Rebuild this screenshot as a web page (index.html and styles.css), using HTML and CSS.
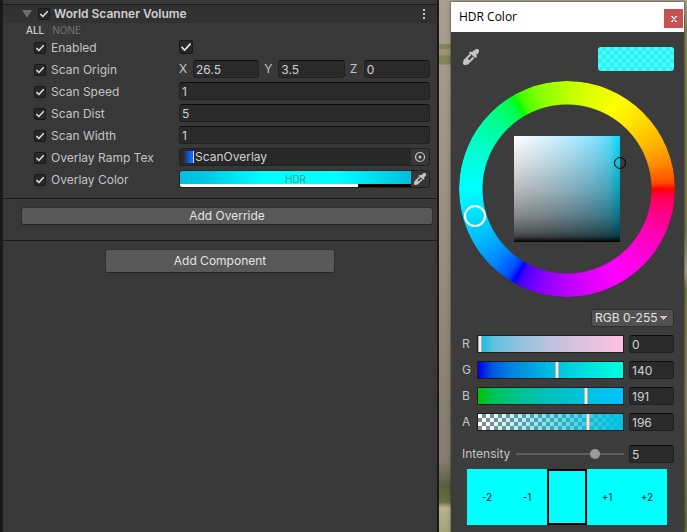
FILE: index.html
```html
<!DOCTYPE html>
<html lang="en">
<head>
<meta charset="utf-8">
<title>World Scanner Volume</title>
<meta name="viewport" content="width=device-width, initial-scale=1">
<link rel="stylesheet" href="styles.css">
</head>
<body>
<svg class="defs" aria-hidden="true">
  <symbol id="dropper" viewBox="0 0 16 16">
    <path fill="currentColor" d="M11 1.500 13 0h2l1 1v2l-1.500 2-1.500 1 1 1-1 2-2-1-1-1-1.500-1.500L7 5 6 4l1-1.500 2 .5z"/>
    <path fill="none" stroke="currentColor" stroke-width="2" d="M7.500 5.500 1.500 11.500 1 14.500l.5.500 3-.5 6-6"/>
    <path fill="currentColor" d="m1 12 3-3L7 12l-3 3H0z"/>
  </symbol>
</svg>
<main class="desktop">
  <section class="inspector">
    <header class="component-head">
      <button class="foldout" aria-label="Collapse"></button>
      <input class="check" type="checkbox" id="component" checked>
      <label class="component-title" for="component">World Scanner Volume</label>
      <button class="kebab" aria-label="Options"><i></i><i></i><i></i></button>
    </header>
    <div class="toggles">
      <button class="toggle toggle-on">ALL</button>
      <button class="toggle">NONE</button>
    </div>
    <div class="properties">
      <div class="row">
        <input class="check" type="checkbox" aria-label="Override Enabled" checked>
        <label class="name" for="enabled">Enabled</label>
        <div class="value"><input class="check check-large" type="checkbox" id="enabled" checked></div>
      </div>
      <div class="row">
        <input class="check" type="checkbox" aria-label="Override Scan Origin" checked>
        <span class="name">Scan Origin</span>
        <div class="value vector">
          <label class="axis" for="ox">X</label><input class="field" id="ox" value="26.5">
          <label class="axis" for="oy">Y</label><input class="field" id="oy" value="3.5">
          <label class="axis" for="oz">Z</label><input class="field" id="oz" value="0">
        </div>
      </div>
      <div class="row">
        <input class="check" type="checkbox" aria-label="Override Scan Speed" checked>
        <label class="name" for="speed">Scan Speed</label>
        <div class="value"><input class="field" id="speed" value="1"></div>
      </div>
      <div class="row">
        <input class="check" type="checkbox" aria-label="Override Scan Dist" checked>
        <label class="name" for="dist">Scan Dist</label>
        <div class="value"><input class="field" id="dist" value="5"></div>
      </div>
      <div class="row">
        <input class="check" type="checkbox" aria-label="Override Scan Width" checked>
        <label class="name" for="width">Scan Width</label>
        <div class="value"><input class="field" id="width" value="1"></div>
      </div>
      <div class="row">
        <input class="check" type="checkbox" aria-label="Override Overlay Ramp Tex" checked>
        <label class="name" for="ramp">Overlay Ramp Tex</label>
        <div class="value object-field">
          <button class="object" id="ramp"><span class="thumb"></span>ScanOverlay</button>
          <button class="field-tool" aria-label="Select texture">
            <svg width="12" height="12" viewBox="0 0 12 12"><circle cx="6" cy="6" r="4.500" fill="none" stroke="currentColor" stroke-width="1.200"/><circle cx="6" cy="6" r="1.500" fill="currentColor"/></svg>
          </button>
        </div>
      </div>
      <div class="row">
        <input class="check" type="checkbox" aria-label="Override Overlay Color" checked>
        <label class="name" for="color">Overlay Color</label>
        <div class="value object-field">
          <button class="hdr" id="color"><span class="hdr-color">HDR</span><span class="hdr-alpha"></span></button>
          <button class="field-tool" aria-label="Pick overlay color"><svg width="12" height="12"><use href="#dropper"/></svg></button>
        </div>
      </div>
    </div>
    <div class="override-area"><button class="btn">Add Override</button></div>
    <div class="component-area"><button class="btn btn-tall">Add Component</button></div>
  </section>

  <section class="picker">
    <header class="titlebar"><h1 class="title">HDR Color</h1><button class="close" aria-label="Close"><svg width="6" height="6" viewBox="0 0 6 6"><path d="M1 .5l4 5M5 .5l-4 5M0 .5h2M4 .5h2M0 5.500h2M4 5.500h2" stroke="currentColor" stroke-width="1.200"/></svg></button></header>
    <div class="picker-body">
      <div class="picker-top">
        <button class="pick" aria-label="Pick color"><svg width="16" height="16"><use href="#dropper"/></svg></button>
        <div class="preview"></div>
      </div>
      <div class="wheel">
        <div class="square"><span class="square-cursor"></span></div>
        <span class="wheel-cursor"></span>
      </div>
      <div class="mode-line">
        <select class="mode" aria-label="Color mode"><option>RGB 0-255</option></select>
      </div>
      <div class="channels">
        <div class="channel"><label for="r">R</label><input class="slider red" id="r" type="range" min="0" max="255" value="0"><input class="field" aria-label="Red" value="0"></div>
        <div class="channel"><label for="g">G</label><input class="slider green" id="g" type="range" min="0" max="255" value="140"><input class="field" aria-label="Green" value="140"></div>
        <div class="channel"><label for="b">B</label><input class="slider blue" id="b" type="range" min="0" max="255" value="191"><input class="field" aria-label="Blue" value="191"></div>
        <div class="channel"><label for="a">A</label><input class="slider alpha" id="a" type="range" min="0" max="255" value="196"><input class="field" aria-label="Alpha" value="196"></div>
      </div>
      <div class="channel intensity"><label for="i">Intensity</label><input class="line-slider" id="i" type="range" min="-10" max="10" value="5"><input class="field" aria-label="Intensity value" value="5"></div>
      <div class="stops">
        <button class="stop">-2</button><button class="stop">-1</button><button class="stop stop-current" aria-label="Current"></button><button class="stop">+1</button><button class="stop">+2</button>
      </div>
    </div>
  </section>
</main>
</body>
</html>
```
FILE: styles.css
```css
* { box-sizing: border-box; }

body {
  margin: 0;
  background: #383838;
  color: #c4c4c4;
  font: 12px/16px Inter, "Liberation Sans", sans-serif;
}

button, input, select { margin: 0; font: inherit; color: inherit; }
button { padding: 0; border: 0; background: none; }
.defs { position: absolute; width: 0; height: 0; }

.desktop {
  display: grid;
  grid-template-columns: minmax(0, 1fr) 233px;
  gap: 12px;
  min-height: 100vh;
  padding-right: 3px;
  background:
    linear-gradient(transparent 460px, #59603c 486px, #6b6e46 502px, #b7b58d 508px, #a5a379 532px) left / 451px 100% no-repeat,
    linear-gradient(transparent 44px, #858455 44px, #858455 49px, #9a9374 49px, #9a9374 55px, #858455 56px, #858455 64px, transparent 65px) left / 451px 100% no-repeat,
    linear-gradient(#aba594, #86865a 30px, #767a48 120px, #77784c 230px, #aaa58b 270px, #77764a 290px, #86805a 400px, #66683d 532px) right / 3px 100% no-repeat,
    linear-gradient(#aaa08f, #9b907f 220px, #877e6f 440px);
}

/* Inspector */
.inspector {
  padding-top: 4px;
  background: #383838;
  border: solid #191919;
  border-width: 0 2px 0 3px;
}

.component-head {
  display: flex;
  align-items: center;
  height: 19px;
  padding: 0 8px 0 19px;
  background: #323232;
  border-top: 1px solid #1a1a1a;
}

.foldout {
  width: 10px;
  height: 8px;
  margin-right: 6px;
  background: #6e6e6e;
  clip-path: polygon(0 0, 100% 0, 50% 100%);
}

.component-title { flex: 1; margin-left: 4px; font-weight: 600; color: #d0d0d0; }

.kebab { display: grid; gap: 2px; padding: 0 4px; }
.kebab i { width: 2px; height: 2px; background: #c4c4c4; }

.check {
  flex: none;
  width: 12px;
  height: 12px;
  appearance: none;
  background: #282828;
  border: 1px solid #181818;
  border-radius: 2px;
}

.check:checked::before {
  content: "";
  display: block;
  height: 100%;
  background: #e4e4e4;
  clip-path: polygon(8% 54%, 20% 44%, 38% 66%, 82% 17%, 93% 28%, 39% 86%);
}

.check-large { width: 14px; height: 14px; }

.toggles { display: flex; gap: 8px; height: 15px; padding-left: 23px; }
.toggle { font-size: 10px; line-height: 15px; color: #747474; }
.toggle-on { color: #e4e4e4; }

.properties { padding: 0 7px 8px 31px; margin-top: -2px; }
.row { display: flex; align-items: center; height: 22px; }
.row > .check, .name { margin-top: 2px; }
.name { flex: none; width: 128px; margin-left: 5px; white-space: nowrap; }
.value { display: flex; align-items: center; flex: 1; min-width: 0; }
.vector { gap: 5px; }
.axis { flex: none; width: 9px; }

.field {
  flex: 1;
  width: 0;
  min-width: 0;
  height: 18px;
  padding: 0 2px;
  color: #d2d2d2;
  background: #2a2a2a;
  border: 1px solid #212121;
  border-top-color: #0d0d0d;
  border-radius: 3px;
}

.object-field {
  align-items: stretch;
  height: 18px;
  background: #282828;
  border: 1px solid #202020;
  border-radius: 3px;
  overflow: hidden;
}

.object { display: flex; flex: 1; align-items: center; padding-left: 3px; color: #d2d2d2; }

.thumb {
  width: 11px;
  height: 12px;
  margin-right: 1px;
  background: linear-gradient(90deg, #282828, #0a6cff 80%);
  border-right: 1px solid #d8e4ff;
}

.field-tool {
  display: grid;
  place-items: center;
  width: 18px;
  color: #c4c4c4;
  background: #373737;
}

.hdr { display: flex; flex: 1; flex-direction: column; }

.hdr-color {
  flex: 1;
  width: 100%;
  height: 13px;
  background: linear-gradient(90deg, #00c0e0, #00c6e4 10%, #00ffff 36%, #00ffff 68%, #00c0e0 98%);
  font-size: 10px;
  line-height: 17px;
  color: #4f9494;
}

.hdr-alpha { width: 100%; height: 3px; background: linear-gradient(90deg, #fff 77%, #000 77%); }

.btn {
  width: 100%;
  height: 18px;
  color: #e4e4e4;
  background: #585858;
  border: 1px solid #303030;
  border-bottom-color: #242424;
  border-radius: 3px;
}

.btn-tall { width: 230px; height: 24px; }

.override-area {
  padding: 8px 4px 15px 18px;
  border: solid #1a1a1a;
  border-width: 1px 0;
}

.component-area { display: flex; justify-content: center; padding-top: 8px; }

/* Color picker window */
.picker {
  margin-top: 2px;
  background: #3c3c3c;
  box-shadow: 0 0 0 1px #00000030, 0 0 6px #00000040;
}

.titlebar {
  display: flex;
  align-items: center;
  justify-content: space-between;
  height: 30px;
  padding: 0 1px 0 8px;
  background: #fff;
}

.title { margin: 0; font: 12px/16px "Open Sans", "Noto Sans", sans-serif; color: #000; }

.close {
  display: grid;
  place-items: center;
  width: 19px;
  height: 19px;
  margin-top: 3px;
  color: #fff;
  background: #c75050;
}

.picker-body { padding: 15px 10px 7px 11px; }
.picker-top { display: flex; justify-content: space-between; align-items: flex-start; }
.pick { display: grid; padding: 2px 1px; color: #c4c4c4; }

.preview {
  width: 76px;
  height: 24px;
  border-radius: 3px;
  background: repeating-conic-gradient(#34eeee 0 25%, #40ffff 0 50%) 0 0 / 8px 8px;
}

.wheel {
  position: relative;
  display: grid;
  place-items: center;
  width: 216px;
  height: 216px;
  margin: 10px auto 12px -3px;
}

.wheel::before {
  content: "";
  position: absolute;
  inset: 0;
  border-radius: 50%;
  background: conic-gradient(from 90deg,
    #f00, #ff003f 3deg, #ff0059 6deg, #ff0089 15deg, #ff00bc 30deg, #ff00e1 45deg,
    #f0f 60deg, #e100ff 75deg, #bc00ff 90deg, #8900ff 105deg, #5900ff 114deg, #3f00ff 117deg,
    #00f 120deg, #003fff 123deg, #0059ff 126deg, #0089ff 135deg, #00bcff 150deg, #00e1ff 165deg,
    #0ff 180deg, #00ffe1 195deg, #00ffbc 210deg, #00ff89 225deg, #00ff59 234deg, #00ff3f 237deg,
    #0f0 240deg, #3fff00 243deg, #59ff00 246deg, #89ff00 255deg, #bcff00 270deg, #e1ff00 285deg,
    #ff0 300deg, #ffe100 315deg, #ffbc00 330deg, #ff8900 345deg, #ff5900 354deg, #ff3f00 357deg, #f00);
  mask: radial-gradient(circle, transparent 84px, #000 85px);
}

.square {
  position: relative;
  width: 106px;
  height: 106px;
  background:
    linear-gradient(#0000, #0000001f 25%, #00000044 50%, #00000076 75%, #000000a6 90%, #000000bf 95%, #000 100%),
    linear-gradient(90deg, #fff, #e1f6ff 25%, #bcedff 50%, #89e3ff 75%, #59deff 90%, #00daff);
}

.square-cursor {
  position: absolute;
  top: 21px;
  right: -6px;
  width: 12px;
  height: 12px;
  border: 1px solid #000;
  border-radius: 50%;
}

.wheel-cursor {
  position: absolute;
  top: 124px;
  left: 5px;
  width: 22px;
  height: 22px;
  border: 2px solid #fff;
  border-radius: 50%;
}

.mode-line { display: flex; justify-content: flex-end; margin-bottom: 8px; }

.mode {
  height: 18px;
  width: 83px;
  padding: 0 3px;
  appearance: none;
  color: #e4e4e4;
  border: 1px solid #303030;
  border-radius: 3px;
  background:
    linear-gradient(to top right, transparent 50%, #c4c4c4 50%) right 9px center / 4px 4px no-repeat,
    linear-gradient(to top left, transparent 50%, #c4c4c4 50%) right 5px center / 4px 4px no-repeat,
    #515151;
}

.channels { display: grid; gap: 8px; }
.channel { display: grid; grid-template-columns: 10px 1fr 45px; column-gap: 5px; align-items: center; }
.channel .field { width: 100%; }

.slider {
  width: 100%;
  height: 18px;
  appearance: none;
  border: 1px solid #1c1c1c;
}

.slider::-webkit-slider-thumb {
  appearance: none;
  width: 4px;
  height: 16px;
  background: #eee;
  border: solid #b4b4b4;
  border-width: 0 1px;
}

.red { background: linear-gradient(90deg, #00c2e0, #59c2e0 10%, #89c2e0 25%, #bcc2e0 50%, #e1c2e0 75%, #ffc2e0); }
.green { background: linear-gradient(90deg, #0000e0, #0059e0 10%, #0089e0 25%, #00bce0 50%, #00e1e0 75%, #00ffe0); }
.blue { background: linear-gradient(90deg, #00c200, #00c259 10%, #00c289 25%, #00c2bc 50%, #00c2e1 75%, #00c2ff); }
.alpha {
  background:
    linear-gradient(90deg, #00c2e000, #00c2e0),
    repeating-conic-gradient(#888 0 25%, #fff 0 50%) 0 0 / 8px 8px;
}

.intensity { grid-template-columns: 49px 1fr 45px; margin: 14px 0 6px; }

.line-slider {
  width: 100%;
  height: 12px;
  appearance: none;
  background: linear-gradient(#5e5e5e, #5e5e5e) center / 100% 2px no-repeat;
}

.line-slider::-webkit-slider-thumb {
  appearance: none;
  width: 10px;
  height: 10px;
  border-radius: 50%;
  background: #999;
}

.stops {
  display: grid;
  grid-template-columns: repeat(5, 1fr);
  height: 56px;
  margin: 0 7px 0 5px;
  background: #0ff;
}

.stop { font-size: 10px; color: #013; }
.stop-current { border: 2px solid #000; }
```
